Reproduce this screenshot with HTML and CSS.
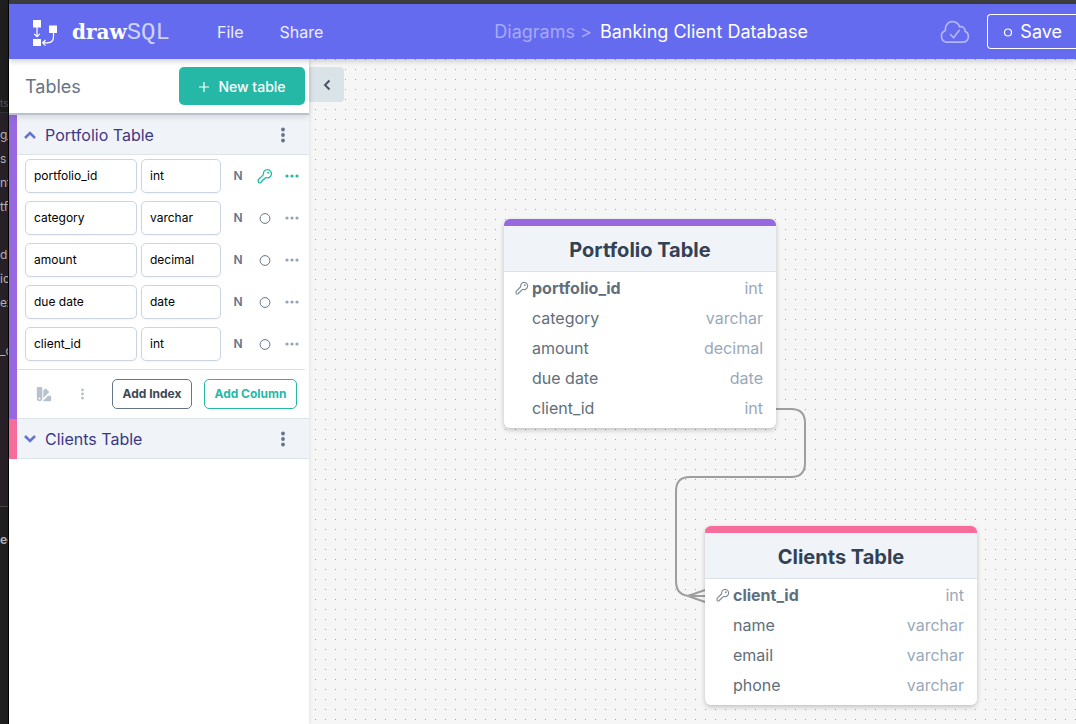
FILE: index.html
```html
<!DOCTYPE html>
<html lang="en">
<head>
<meta charset="utf-8">
<meta name="viewport" content="width=device-width, initial-scale=1">
<title>Banking Client Database</title>
<link rel="stylesheet" href="styles.css">
</head>
<body>
<svg class="defs" aria-hidden="true">
  <symbol id="key" viewBox="0 0 16 16"><path d="M10.4 1.6a4 4 0 0 0-3.9 5L1.8 11.3q-.6.6-.6 1.400v.9q0 1.200 1.200 1.200h.7q1.200 0 1.200-1.200v-.5h.4q1.200 0 1.200-1.200v-.4h.4q.6 0 1-.5l1.500-1.500a4.100 4.100 0 1 0 1.600-7.900z" fill="none" stroke="currentColor" stroke-width="1.3" stroke-linejoin="round"/><circle cx="11.2" cy="4.8" r="1" fill="currentColor"/></symbol>
  <symbol id="more" viewBox="0 0 4 16"><circle cx="2" cy="2.500" r="1.9"/><circle cx="2" cy="8" r="1.9"/><circle cx="2" cy="13.500" r="1.9"/></symbol>
  <symbol id="dots" viewBox="0 0 14 4"><circle cx="2" cy="2" r="1.6"/><circle cx="7" cy="2" r="1.6"/><circle cx="12" cy="2" r="1.6"/></symbol>
  <symbol id="ring" viewBox="0 0 12 12"><circle cx="6" cy="6.500" r="4.900" fill="none" stroke="currentColor"/></symbol>
</svg>
<div class="screen">
  <div class="behind">
    <span class="behind-tab">ts</span>
    <div class="behind-list"><span>g_</span><span>s</span><span>nt</span><span>tfo</span><span></span><span>d</span><span>io</span><span>ex</span><span></span><span>_d</span></div>
    <div class="behind-foot">ee</div>
  </div>
  <div class="app">
    <header class="topbar">
      <a class="brand" href="#">
        <svg class="brand-mark" viewBox="0 0 26 28" width="26" height="28" aria-hidden="true"><path fill="#fff" d="M1 1h8v7.500H1zM17 6.500h8V14h-8zM1 20h8v7H1z"/><path d="M5 8v9.500M2.200 14.800L5 17.600l2.800-2.800M21.500 14v3.500q0 6.300-6 6.300h-4.500M13.500 21l-2.800 2.800 2.800 2.800" fill="none" stroke="#fff" stroke-width="1.2"/></svg>
        <span class="brand-name"><b>draw</b><span>SQL</span></span>
      </a>
      <nav class="menu"><button>File</button><button>Share</button></nav>
      <div class="crumbs"><a href="#">Diagrams &gt;</a><span>Banking Client Database</span></div>
      <svg class="cloud" viewBox="0 0 30 24" width="30" height="24" fill="none" stroke="currentColor" stroke-width="1.700" stroke-linecap="round" stroke-linejoin="round" role="img" aria-label="Saved"><path d="M7 22.2h15.800a5.700 5.700 0 0 0 2.200-10.900 4 4 0 0 0-5.300-4.400A7.300 7.300 0 0 0 5.400 9.500v1.100A6 6 0 0 0 7 22.200z"/><path d="M10.500 14.500l3 3.300 5.600-7.300"/></svg>
      <button class="save"><svg viewBox="0 0 10 10" width="10" height="10" aria-hidden="true"><circle cx="5" cy="5.500" r="3.500" fill="none" stroke="#fff" stroke-width="1.2"/></svg>Save</button>
    </header>
    <div class="work">
      <aside class="sidebar">
        <div class="side-head"><h2>Tables</h2><button class="new"><svg viewBox="0 0 12 12" width="12" height="12" aria-hidden="true"><path d="M6 2v10M1 7h10" stroke="#fff" stroke-width="1.2"/></svg>New table</button></div>
        <section class="group violet">
          <div class="group-head"><button class="group-name"><svg viewBox="0 0 12 8" width="12" height="8" aria-hidden="true"><path d="M1 7l5-5 5 5" fill="none" stroke="#6574cd" stroke-width="2.6"/></svg>Portfolio Table</button><button class="icon" aria-label="Table options"><svg width="4" height="16"><use href="#more"/></svg></button></div>
          <div class="columns">
            <div class="col"><input aria-label="Column name" value="portfolio_id"><input aria-label="Column type" value="int"><button class="null">N</button><button class="icon green" aria-label="Index"><svg width="16" height="16"><use href="#key"/></svg></button><button class="icon green" aria-label="More"><svg width="14" height="4"><use href="#dots"/></svg></button></div>
            <div class="col"><input aria-label="Column name" value="category"><input aria-label="Column type" value="varchar"><button class="null">N</button><button class="icon" aria-label="Index"><svg width="12" height="12"><use href="#ring"/></svg></button><button class="icon soft" aria-label="More"><svg width="14" height="4"><use href="#dots"/></svg></button></div>
            <div class="col"><input aria-label="Column name" value="amount"><input aria-label="Column type" value="decimal"><button class="null">N</button><button class="icon" aria-label="Index"><svg width="12" height="12"><use href="#ring"/></svg></button><button class="icon soft" aria-label="More"><svg width="14" height="4"><use href="#dots"/></svg></button></div>
            <div class="col"><input aria-label="Column name" value="due date"><input aria-label="Column type" value="date"><button class="null">N</button><button class="icon" aria-label="Index"><svg width="12" height="12"><use href="#ring"/></svg></button><button class="icon soft" aria-label="More"><svg width="14" height="4"><use href="#dots"/></svg></button></div>
            <div class="col"><input aria-label="Column name" value="client_id"><input aria-label="Column type" value="int"><button class="null">N</button><button class="icon" aria-label="Index"><svg width="12" height="12"><use href="#ring"/></svg></button><button class="icon soft" aria-label="More"><svg width="14" height="4"><use href="#dots"/></svg></button></div>
          </div>
          <div class="actions">
            <button class="icon pale" aria-label="Colour"><svg width="16" height="16" viewBox="0 0 16 16"><path fill-rule="evenodd" d="M1.500 1h4q.8 0 .8.800v10.700a2.700 2.700 0 0 1-5.500 0V1.800q0-.8.700-.8zM3.500 11.500a1 1 0 1 0 0 2 1 1 0 0 0 0-2z"/><path d="M7.300 4.500l1.800-1.700q.5-.5 1 0L12.800 5.600q.5.500 0 1L7.300 12zM14.300 9.700q.9 0 .9.900v3.700q0 .9-.9.900H6.500l5.500-5.500z"/></svg></button>
            <button class="icon pale" aria-label="More"><svg width="3" height="12" viewBox="0 0 4 16"><use href="#more"/></svg></button>
            <button class="outline">Add Index</button><button class="outline teal">Add Column</button>
          </div>
        </section>
        <section class="group pink">
          <div class="group-head"><button class="group-name"><svg viewBox="0 0 12 8" width="12" height="8" aria-hidden="true"><path d="M1 1l5 5 5-5" fill="none" stroke="#6574cd" stroke-width="2.6"/></svg>Clients Table</button><button class="icon" aria-label="Table options"><svg width="4" height="16"><use href="#more"/></svg></button></div>
        </section>
      </aside>
      <main class="canvas">
        <button class="collapse" aria-label="Collapse"><svg viewBox="0 0 8 12" width="8" height="12"><path d="M6.500 1.500L2 6l4.500 4.500" fill="none" stroke="#4a5568" stroke-width="2"/></svg></button>
        <svg class="links" aria-hidden="true"><path d="M467 350H482Q496 350 496 364V404Q496 418 482 418H381Q367 418 367 432V522Q367 537 382 537H396M379 537L396 531M379 537L396 543"/></svg>
        <article class="node violet portfolio">
          <h3>Portfolio Table</h3>
          <dl>
            <div class="primary"><dt><svg width="14" height="14"><use href="#key"/></svg>portfolio_id</dt><dd>int</dd></div>
            <div><dt>category</dt><dd>varchar</dd></div>
            <div><dt>amount</dt><dd>decimal</dd></div>
            <div><dt>due date</dt><dd>date</dd></div>
            <div><dt>client_id</dt><dd>int</dd></div>
          </dl>
        </article>
        <article class="node pink clients">
          <h3>Clients Table</h3>
          <dl>
            <div class="primary"><dt><svg width="14" height="14"><use href="#key"/></svg>client_id</dt><dd>int</dd></div>
            <div><dt>name</dt><dd>varchar</dd></div>
            <div><dt>email</dt><dd>varchar</dd></div>
            <div><dt>phone</dt><dd>varchar</dd></div>
          </dl>
        </article>
      </main>
    </div>
  </div>
</div>
</body>
</html>
```
FILE: styles.css
```css
* { box-sizing: border-box; }
body { margin: 0; font-family: Inter, "Liberation Sans", sans-serif; font-size: 16px; color: #606f7b; overflow: hidden; }
button { font: inherit; color: inherit; background: none; border: 0; padding: 0; cursor: pointer; }
a { color: inherit; text-decoration: none; }
h2, h3, dl, dd { margin: 0; }
svg { display: block; flex: none; }
.defs { position: absolute; width: 0; height: 0; }

.screen { display: grid; grid-template-columns: 9px minmax(0, 1fr); height: 100vh; }
.behind { display: flex; flex-direction: column; background: #1e1e1e; border-right: 1px solid #000; color: #b5b0b4; font-size: 12px; overflow: hidden; white-space: nowrap; }
.behind-tab { height: 113px; padding-top: 94px; line-height: 18px; color: #555; font-size: 10px; border-bottom: 1px solid #333; }
.behind-list { display: flex; flex-direction: column; height: 393px; padding-top: 10px; background: #272027; }
.behind-list span { height: 24px; line-height: 24px; }
.behind-foot { flex: 1; padding-top: 24px; font-weight: 700; line-height: 18px; border-top: 1px solid #444; }

.app { display: flex; flex-direction: column; min-width: 0; border-top: 4px solid #3d3d3d; }
.topbar { position: relative; z-index: 2; display: flex; align-items: center; height: 55px; flex: none; padding-left: 23px; background: #656bef; color: #fff; box-shadow: 0 2px 6px rgba(0, 0, 0, .2); white-space: nowrap; }
.brand { display: flex; align-items: center; gap: 14px; }
.brand-mark { margin-top: 2px; }
.brand-name { display: flex; align-items: baseline; width: 98px; line-height: 28px; padding-top: 2px; }
.brand-name b { font-family: "DejaVu Serif", serif; font-size: 20px; }
.brand-name span { font-family: "Liberation Mono", monospace; font-size: 24px; color: #d0d3ff; }
.menu { display: flex; gap: 36px; margin-left: 47px; color: #eef; }
.crumbs { display: flex; gap: 8px; margin-left: 171px; font-size: 18px; }
.crumbs a { color: #a5a9f6; }
.cloud { margin-left: auto; margin-right: 17px; color: #b2b5f8; }
.save { display: flex; align-items: center; gap: 7px; height: 35px; padding: 0 14px 0 15px; border: 1px solid #fff; border-right: 0; border-radius: 4px 0 0 4px; font-size: 18px; }

.work { flex: 1; display: grid; grid-template-columns: 300px minmax(0, 1fr); min-height: 0; }
.sidebar { position: relative; z-index: 1; background: #fff; box-shadow: 0 0 4px rgba(0, 0, 0, .12); }
.side-head { position: relative; display: flex; align-items: center; justify-content: space-between; height: 56px; padding: 2px 4px 2px 16px; border-bottom: 2px solid #b8c2cc; box-shadow: 0 2px 6px rgba(0, 0, 0, .12); }
.side-head h2 { font-size: 18px; font-weight: 400; color: #64748b; }
.new { display: flex; align-items: center; justify-content: center; gap: 8px; width: 126px; height: 38px; border-radius: 5px; background: #26b8a6; color: #fff; font-size: 14px; font-weight: 500; }
.violet { --accent: #9768e0; }
.pink { --accent: #f66d9b; }
.group { border-left: 8px solid var(--accent); }
.group-head { display: flex; align-items: center; justify-content: space-between; height: 40px; padding: 0 24px 0 7px; background: #f0f4f9; border-bottom: 1px solid #dae4e9; }
.group-name { display: flex; align-items: center; gap: 9px; color: #3c3887; }
.icon { display: grid; place-items: center; color: #64748b; fill: currentColor; }
.green { color: #26b8a6; }
.soft { color: #94a3b8; }
.pale { color: #b8c2cc; }
.columns { display: flex; flex-direction: column; gap: 8px; margin-right: 4px; padding: 4px 4px 8px 8px; border-bottom: 1px solid #dae1e7; }
.col { display: grid; grid-template-columns: 112px 80px 26px 20px 26px; column-gap: 4px; align-items: center; }
.col input { min-width: 0; height: 34px; padding: 0 8px 2px; border: 1px solid #cbd5e1; border-radius: 5px; background: #fff; color: #000; font: 12px Inter, "Liberation Sans", sans-serif; box-shadow: 0 1px 2px rgba(0, 0, 0, .04); }
.null { font-size: 12px; font-weight: 600; color: #64748b; padding-bottom: 2px; }
.actions { display: flex; align-items: center; padding: 9px 12px 9px 19px; border-bottom: 1px solid #dae4e9; }
.actions .icon { margin-right: 29px; }
.outline { flex: none; width: 80px; height: 30px; margin-right: 12px; padding-bottom: 2px; border: 1px solid #64748b; border-radius: 5px; color: #3d4852; font-size: 12px; font-weight: 700; white-space: nowrap; }
.actions .icon + .icon { margin-right: auto; }
.teal { width: 93px; margin-right: 0; border-color: #26b8a6; color: #26b8a6; }

.canvas { position: relative; overflow: hidden; background-color: #f6f6f6; background-image: linear-gradient(#f6f6f6 9px, transparent 9px), linear-gradient(90deg, #f6f6f6 9px, #a6a6a6 9px); background-size: 10px 10px; background-position: -3px 1px; }
.collapse { position: absolute; left: 0; top: 8px; width: 35px; height: 35px; display: grid; place-items: center; background: #dae3e8; border-radius: 0 4px 4px 0; }
.links { position: absolute; inset: 0; width: 100%; height: 100%; fill: none; stroke: #9e9e9e; stroke-width: 2; }
.node { position: absolute; width: 272px; background: #fff; border-top: 7px solid var(--accent); border-radius: 6px; box-shadow: 0 2px 5px rgba(0, 0, 0, .22); }
.portfolio { left: 195px; top: 160px; }
.clients { left: 396px; top: 467px; }
.node h3 { padding-top: 3px; background: #f0f4f9; border-bottom: 1px solid #dae1eb; text-align: center; font-size: 20px; line-height: 42px; font-weight: 700; color: #334155; }
.node dl { padding: 1px 13px 5px 28px; }
.node dl div { display: flex; justify-content: space-between; line-height: 30px; }
.node dt { display: flex; align-items: center; }
.node dt svg { margin: 0 3px 0 -17px; color: #7d8a97; }
.node .primary dt { font-weight: 700; }
.node dd { color: #9aa8ba; }
```
